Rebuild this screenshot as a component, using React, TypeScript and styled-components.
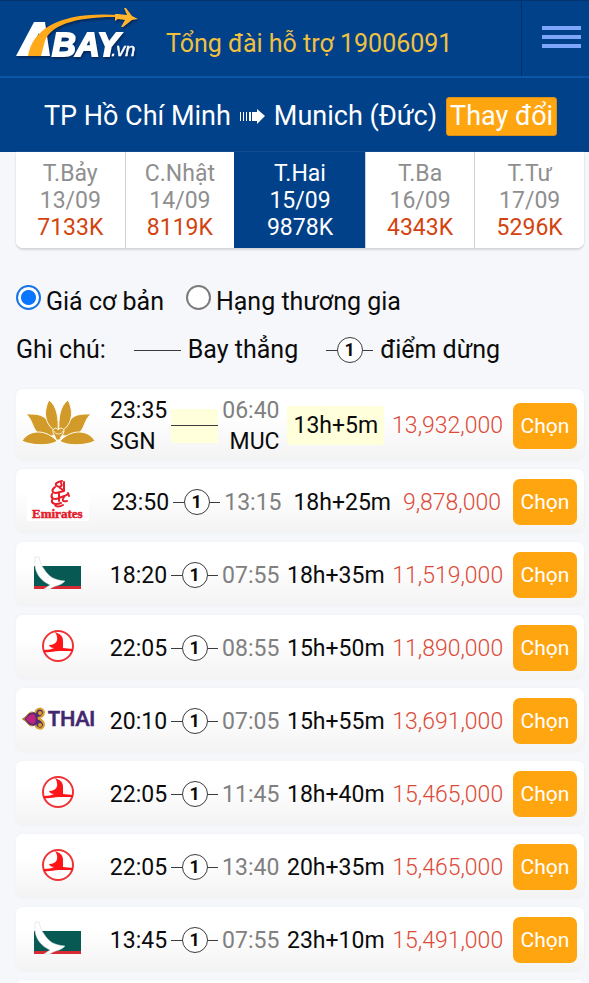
import React, { useState } from "react";
import styled, { createGlobalStyle } from "styled-components";

const blue = "#00418a";
const orange = "#ffa50f";

const GlobalStyle = createGlobalStyle`
  *, *::before, *::after { box-sizing: border-box; }
  html, body, #root { height: 100%; }
  body {
    margin: 0;
    overflow: hidden;
    background: #f5f7fb;
    color: #0b0b0b;
    font: 400 23px/28px Roboto, "Liberation Sans", sans-serif;
  }
  button { font: inherit; cursor: pointer; }
`;

const Page = styled.div`
  height: 100%;
  overflow: hidden;
`;

const TopBar = styled.header`
  display: flex;
  align-items: stretch;
  height: 78px;
  background: ${blue};
  border-top: 1px solid #04346f;
  border-bottom: 2px solid #0c54a6;
`;

const LogoLink = styled.a`
  display: block;
  flex: none;
  width: 124px;
  margin: 7px 0 0 16px;
`;

const LogoArt = styled.svg`
  display: block;
  overflow: visible;
  filter: drop-shadow(1px 2px 1px #04285a);
`;

const Hotline = styled.a`
  flex: 1;
  margin-left: 26px;
  align-self: center;
  padding-top: 10px;
  color: #f0c040;
  font-size: 25px;
  line-height: 32px;
  text-decoration: none;
  white-space: nowrap;
`;

const MenuButton = styled.button`
  display: flex;
  flex-direction: column;
  gap: 5px;
  flex: none;
  width: 68px;
  padding: 25px 8px 0 20px;
  border: 0;
  border-left: 1px solid #04306a;
  background: none;
`;

const MenuBar = styled.span`
  height: 4px;
  background: #7ea6fb;
`;

const TripBar = styled.section`
  display: flex;
  align-items: center;
  justify-content: center;
  gap: 9px;
  height: 74px;
  padding: 2px 0 0 12px;
  background: ${blue};
  color: #fff;
`;

const TripTitle = styled.h1`
  display: flex;
  align-items: center;
  gap: 9px;
  margin: 0;
  font-size: 27px;
  line-height: 36px;
  font-weight: 400;
  white-space: nowrap;
`;

const ChangeButton = styled.button`
  height: 39px;
  padding: 0 3px;
  border: 1px solid #d9901a;
  border-radius: 3px;
  background: ${orange};
  color: #fff;
  font-size: 27px;
  line-height: 36px;
  white-space: nowrap;
`;

const Main = styled.main`
  padding: 0 5px 0 16px;
`;

const DayTabs = styled.nav`
  display: flex;
  height: 96px;
  border-radius: 0 0 7px 7px;
  background: #fff;
  box-shadow: 0 2px 2px #d3d5da, 0 0 1px #b9bbc0;
  overflow: hidden;
`;

const DayTab = styled.button<{ $active?: boolean }>`
  display: flex;
  flex-direction: column;
  align-items: center;
  flex: ${(p) => (p.$active ? "130 1 0" : "109 1 0")};
  padding: 8px 0 0;
  border: 0;
  border-left: 1px solid ${(p) => (p.$active ? blue : "#d0d0d0")};
  background: ${(p) => (p.$active ? blue : "#fff")};
  color: ${(p) => (p.$active ? "#fff" : "#8f8f8f")};
  font-size: 23px;
  line-height: 27px;

  &:first-child {
    border-left: 0;
  }
`;

const DayPrice = styled.span<{ $active?: boolean }>`
  color: ${(p) => (p.$active ? "#fff" : "#d2440f")};
`;

const FareChoice = styled.fieldset`
  display: flex;
  gap: 22px;
  margin: 37px 0 0;
  padding: 0;
  border: 0;
  font-size: 25px;
  line-height: 34px;
`;

const FareLabel = styled.label`
  display: flex;
  align-items: flex-start;
  gap: 5px;
  white-space: nowrap;
`;

const Radio = styled.input`
  appearance: none;
  width: 25px;
  height: 25px;
  margin: 0;
  border: 2px solid #7b7b7b;
  border-radius: 50%;
  background: #fff;

  &:checked {
    border-color: #1673e6;
    background: radial-gradient(circle, #0a75ff 0 7px, #fff 8px);
  }
`;

const Legend = styled.div`
  display: flex;
  align-items: center;
  margin-top: 13px;
  font-size: 25px;
  line-height: 36px;
  white-space: nowrap;
`;

const LegendItem = styled.span`
  display: flex;
  align-items: center;
  gap: 7px;
  margin-left: 28px;
`;

const Connector = styled.span<{ $highlight?: boolean }>`
  display: flex;
  align-items: center;
  width: 47px;
  height: ${(p) => (p.$highlight ? "34px" : "26px")};
  background: ${(p) => (p.$highlight ? "#ffffdc" : "none")};

  &::before, &::after {
    content: "";
    flex: 1;
    height: 1px;
    background: #3c3c3c;
  }
`;

const StopCount = styled.span`
  width: 26px;
  height: 26px;
  border: 1px solid #3c3c3c;
  border-radius: 50%;
  background: #fff;
  font-size: 18px;
  line-height: 24px;
  font-weight: 700;
  text-align: center;
`;

const FlightList = styled.ul`
  display: flex;
  flex-direction: column;
  gap: 9px;
  margin: 21px 0 0;
  padding: 0;
  list-style: none;
`;

const FlightRow = styled.li<{ $tall?: boolean }>`
  display: flex;
  align-items: center;
  height: ${(p) => (p.$tall ? "71px" : "64px")};
  padding: 2px 7px 0 0;
  border-radius: 7px;
  background: linear-gradient(#fff 0, #fff 35%, #f3f3f4 100%);
  box-shadow: 0 0 3px #eef0f3;
  white-space: nowrap;
`;

const CardEdge = styled.div`
  height: 64px;
  margin-top: 9px;
  border-radius: 7px;
  background: #fff;
`;

const Airline = styled.div`
  display: flex;
  align-items: center;
  justify-content: center;
  flex: none;
  width: 84px;
  height: 56px;
  padding-bottom: 5px;
`;

const Details = styled.div`
  display: flex;
  align-items: center;
  justify-content: space-around;
  flex: 1;
  margin-left: 6px;
`;

const Route = styled.div`
  display: flex;
  align-items: center;
  gap: 4px;
`;

const Point = styled.div<{ $end?: boolean }>`
  display: flex;
  flex-direction: column;
  text-align: ${(p) => (p.$end ? "right" : "left")};
  line-height: 31px;
`;

const Time = styled.time<{ $end?: boolean }>`
  color: ${(p) => (p.$end ? "#808080" : "#0b0b0b")};
`;

const Duration = styled.span<{ $highlight?: boolean }>`
  padding: ${(p) => (p.$highlight ? "0 6px" : "0")};
  border-radius: 3px;
  background: ${(p) => (p.$highlight ? "#ffffdc" : "none")};
  line-height: 39px;
`;

const Price = styled.span`
  color: #dc4a38;
  font-weight: 300;
  line-height: 31px;
`;

const ChooseButton = styled.button`
  flex: none;
  width: 64px;
  height: 46px;
  margin-left: 6px;
  padding: 0;
  border: 0;
  border-radius: 7px;
  background: ${orange};
  color: #fff;
  font-size: 21px;
`;

function AbayLogo() {
  return (
    <LogoArt width="124" height="58" viewBox="0 0 124 58" role="img" aria-label="ABAY.vn">
      <path fill="#fff" d="M0 48 18 14H29L34 48Z" />
      <path fill={blue} d="m15 40 8-15 1 3-5 12Z" />
      <path fill="#ffa91b" d="M12 48C17 19 47 3 104 7V9C61 8 34 17 29 33L25 48Z" />
      <path fill="#ffb52d" d="m102 6 9 1-3-7h2l6 8 6 3-6 1-9 7h-2l4-7-7-1-3 2v-7Z" />
      <text x="36" y="48" fill="#fff" fontFamily="Liberation Sans, sans-serif" fontSize="33" fontWeight="700" fontStyle="italic">
        <tspan stroke="#fff" strokeWidth="2">BAY</tspan>
        <tspan dx="-8" fontSize="18" fontWeight="400" stroke="#fff" strokeWidth=".5">.vn</tspan>
      </text>
    </LogoArt>
  );
}

function TripArrow() {
  return (
    <svg width="25" height="16" viewBox="0 0 25 16" aria-hidden="true" fill="#fff">
      <path d="M0 4h1v9H0zM3 4h1v9H3zM6 4h1v9H6zM9 4h2v9H9zM12 4h5V1l8 7-8 8v-3h-5z" />
    </svg>
  );
}

function Lotus() {
  return (
    <svg width="73" height="46" viewBox="0 0 73 46" role="img" aria-label="Vietnam Airlines">
      <g fill="#d29a28" stroke="#fffdf6" strokeWidth="1">
        <path d="M4 14C14 14 20 14 25 20 30 25 34 29 34 35 28 37 20 36 16 33 10 28 11 20 4 14Z" />
        <path d="M69 14C59 14 53 14 48 20 43 25 39 29 39 35 45 37 53 36 57 33 63 28 62 20 69 14Z" />
        <path d="M27 0C35 6 37 18 36 33 22 25 21 12 27 0Z" />
        <path d="M46 0C38 6 36 18 37 33 51 25 52 12 46 0Z" />
        <path d="M0 41C8 28 25 30 35 41 29 46 10 46 0 41Z" />
        <path d="M73 41C65 28 48 30 38 41 44 46 63 46 73 41Z" />
        <path d="M31 30c2-3 4-2 5 0 2-3 6-2 6 1 0 4-4 5-4 9h-4c0-4-4-6-3-10Z" />
      </g>
      <path d="M32 31c1 4 8 4 9 0" fill="none" stroke="#fbefcf" />
    </svg>
  );
}

function Emirates() {
  return (
    <svg width="62" height="42" viewBox="0 0 62 42" role="img" aria-label="Emirates">
      <rect width="62" height="42" fill="#fff" />
      <g fill="none" stroke="#e5202b" strokeWidth="2" strokeLinecap="round">
        <path d="M35 2c-5 1-8 3-5 5s6 0 4-3M28 8c-4 3-3 6 1 6l8-2M37 3v9M25 15c-2 5 3 6 7 4s5-1 9-4M25 21c-1 4 4 5 9 3M32 14v8M37 18c-2 3-2 5 3 4M28 26c1 2 5 2 8 0M33 9l3 2M41 14l1 3" />
      </g>
      <text x="5" y="39" fill="#e5202b" stroke="#e5202b" strokeWidth=".5" fontFamily="Liberation Serif, serif" fontSize="13" fontWeight="700">Emirates</text>
    </svg>
  );
}

function Cathay() {
  return (
    <svg width="50" height="34" viewBox="0 0 50 34" role="img" aria-label="Cathay Pacific">
      <path fill="#075954" d="M1 10h47v20H1z" />
      <path fill="#d82a34" d="M1 30h47v3H1z" />
      <path fill="#fff" stroke="#ccd4d2" strokeWidth=".5" d="M2 1h4c1 5 2 8 5 12 5 8 10 11 21 12-4 5-10 4-15 8h-6l6-4C8 25 3 18 2 10Z" />
    </svg>
  );
}

function Turkish() {
  return (
    <svg width="34" height="34" viewBox="0 0 34 34" role="img" aria-label="Turkish Airlines">
      <circle cx="17" cy="17" r="15" fill="#fff" stroke="#ee3437" strokeWidth="2" />
      <path fill="#ff1418" d="M14 3c8 3 8 6 8 11v5l10 1v2H18c-6 0-10 2-15 1v-2c5 0 8-1 10-2-3 0-4-1-5-3 9 0 10-7 6-13Z" />
    </svg>
  );
}

function Thai() {
  return (
    <svg width="75" height="24" viewBox="0 0 75 24" role="img" aria-label="THAI">
      <g stroke="#d8a32c" strokeWidth="2">
        <path fill="#552b72" d="M14 8c0-8 8-8 9-3 0 5-5 6-7 6 3 1 7 2 7 7-1 6-9 4-9-2Z" />
        <path fill="#bd247d" stroke="#552b72" d="M2 12c4 0 4-6 10-6 5 1 5 11 0 12-6 0-6-6-10-6Z" />
      </g>
      <path fill="none" stroke="#d8a32c" d="M1 12c5 0 5-8 11-7M1 12c5 0 5 8 11 7" />
      <circle cx="19" cy="6" r="2" fill="#d8a32c" />
      <circle cx="19" cy="18" r="2" fill="#d8a32c" />
      <text x="27" y="19" fill="#43276f" stroke="#43276f" strokeWidth=".5" fontFamily="Lato, sans-serif" fontSize="20" fontWeight="700">THAI</text>
    </svg>
  );
}

const logos = { lotus: Lotus, emirates: Emirates, cathay: Cathay, turkish: Turkish, thai: Thai };

interface Flight {
  airline: keyof typeof logos;
  depart: string;
  arrive: string;
  duration: string;
  price: string;
  from?: string;
  to?: string;
}

const flights: Flight[] = [
  { airline: "lotus", depart: "23:35", arrive: "06:40", duration: "13h+5m", price: "13,932,000", from: "SGN", to: "MUC" },
  { airline: "emirates", depart: "23:50", arrive: "13:15", duration: "18h+25m", price: "9,878,000" },
  { airline: "cathay", depart: "18:20", arrive: "07:55", duration: "18h+35m", price: "11,519,000" },
  { airline: "turkish", depart: "22:05", arrive: "08:55", duration: "15h+50m", price: "11,890,000" },
  { airline: "thai", depart: "20:10", arrive: "07:05", duration: "15h+55m", price: "13,691,000" },
  { airline: "turkish", depart: "22:05", arrive: "11:45", duration: "18h+40m", price: "15,465,000" },
  { airline: "turkish", depart: "22:05", arrive: "13:40", duration: "20h+35m", price: "15,465,000" },
  { airline: "cathay", depart: "13:45", arrive: "07:55", duration: "23h+10m", price: "15,491,000" },
];

const days = [
  { name: "T.Bảy", date: "13/09", price: "7133K" },
  { name: "C.Nhật", date: "14/09", price: "8119K" },
  { name: "T.Hai", date: "15/09", price: "9878K" },
  { name: "T.Ba", date: "16/09", price: "4343K" },
  { name: "T.Tư", date: "17/09", price: "5296K" },
];

export default function App() {
  const [day, setDay] = useState(2);
  const [fare, setFare] = useState("basic");

  return (
    <Page>
      <GlobalStyle />
      <TopBar>
        <LogoLink href="#"><AbayLogo /></LogoLink>
        <Hotline href="tel:19006091">Tổng đài hỗ trợ 19006091</Hotline>
        <MenuButton aria-label="Menu"><MenuBar /><MenuBar /><MenuBar /></MenuButton>
      </TopBar>
      <TripBar>
        <TripTitle>TP Hồ Chí Minh <TripArrow /> Munich (Đức)</TripTitle>
        <ChangeButton>Thay đổi</ChangeButton>
      </TripBar>
      <Main>
        <DayTabs>
          {days.map((d, i) => (
            <DayTab key={d.date} $active={i === day} onClick={() => setDay(i)}>
              <span>{d.name}</span>
              <span>{d.date}</span>
              <DayPrice $active={i === day}>{d.price}</DayPrice>
            </DayTab>
          ))}
        </DayTabs>
        <FareChoice>
          <FareLabel>
            <Radio type="radio" name="fare" checked={fare === "basic"} onChange={() => setFare("basic")} />
            Giá cơ bản
          </FareLabel>
          <FareLabel>
            <Radio type="radio" name="fare" checked={fare === "business"} onChange={() => setFare("business")} />
            Hạng thương gia
          </FareLabel>
        </FareChoice>
        <Legend>
          Ghi chú:
          <LegendItem><Connector />Bay thẳng</LegendItem>
          <LegendItem><Connector><StopCount>1</StopCount></Connector>điểm dừng</LegendItem>
        </Legend>
        <FlightList>
          {flights.map((f, i) => {
            const Logo = logos[f.airline];
            const direct = Boolean(f.from);
            return (
              <FlightRow key={i} $tall={direct}>
                <Airline><Logo /></Airline>
                <Details>
                  <Route>
                    <Point><Time>{f.depart}</Time>{f.from && <span>{f.from}</span>}</Point>
                    <Connector $highlight={direct}>{!direct && <StopCount>1</StopCount>}</Connector>
                    <Point $end><Time $end>{f.arrive}</Time>{f.to && <span>{f.to}</span>}</Point>
                  </Route>
                  <Duration $highlight={direct}>{f.duration}</Duration>
                  <Price>{f.price}</Price>
                </Details>
                <ChooseButton>Chọn</ChooseButton>
              </FlightRow>
            );
          })}
        </FlightList>
        <CardEdge />
      </Main>
    </Page>
  );
}
